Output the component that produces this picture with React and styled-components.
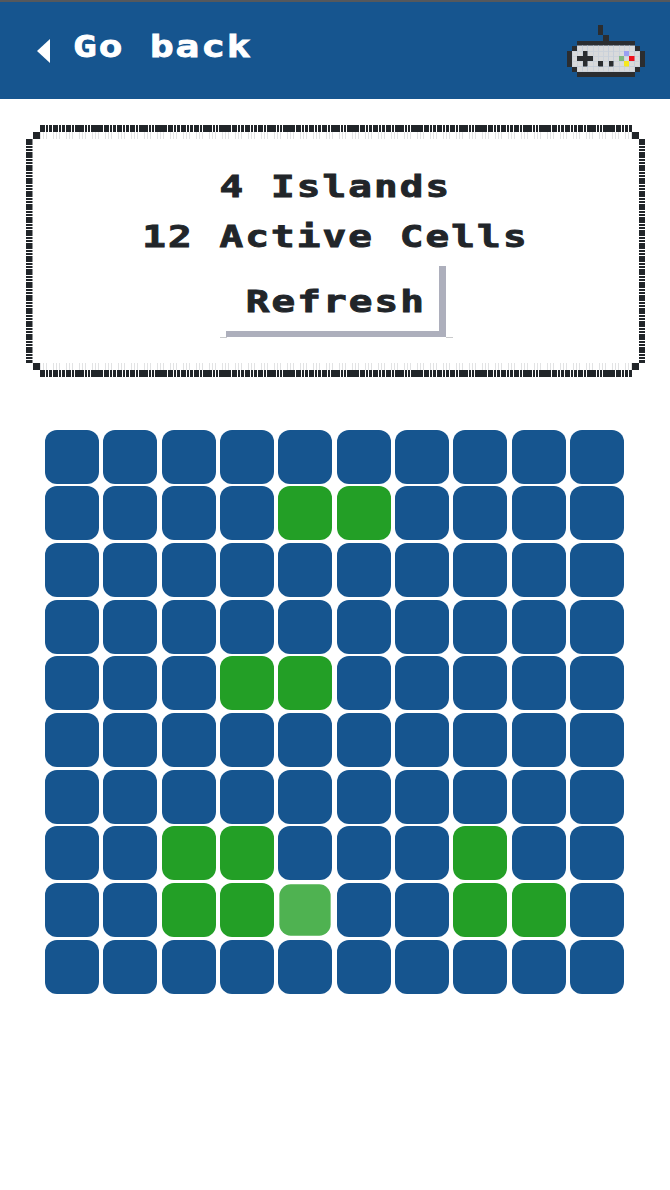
import React from "react"
import styled, { createGlobalStyle } from "styled-components"

const BLUE = "#16558f"
const GREEN = "#239f26"
const INK = "#212529"

const GlobalStyle = createGlobalStyle`
  html, body {
    margin: 0;
    padding: 0;
    background: #ffffff;
  }
`

const ACTIVE = {
  1: [4, 5],
  4: [3, 4],
  7: [2, 3, 7],
  8: [2, 3, 4, 7, 8],
}
const HOVERED = "8-4"

// sprite rows for the controller, one char per pixel
const PAD = [
  "......d........",
  "......d........",
  ".......d.......",
  "..ddddddddddd..",
  ".dllllllllllld.",
  "dlldlllllllplld",
  "dldddlllllglrld",
  "dlldlldldllylld",
  ".dllllllllllld.",
  "..ddddddddddd..",
]
const PIXEL_COLORS = {
  d: "#2b2d30",
  l: "#d9dadb",
  p: "#9a9ff2",
  g: "#7fb77e",
  r: "#f0101c",
  y: "#f6e81e",
}

const hBars = (color) => `repeating-linear-gradient(90deg,
  ${color} 0 5.4px, transparent 5.4px 6.2px,
  ${color} 6.2px 8.4px, transparent 8.4px 9.2px,
  ${color} 9.2px 12px, transparent 12px 12.8px)`
const vBars = (color) => `repeating-linear-gradient(180deg,
  ${color} 0 6px, transparent 6px 7px,
  ${color} 7px 9px, transparent 9px 10px,
  ${color} 10px 12px, transparent 12px 13px)`
const hTicks = `repeating-linear-gradient(90deg,
  #e2e3e4 0 1px, transparent 1px 3px,
  #e2e3e4 3px 4px, transparent 4px 6px,
  #e2e3e4 6px 7px, transparent 7px 13px)`
const solid = `linear-gradient(${INK}, ${INK})`

const Page = styled.div`
  width: 670px;
  height: 1190px;
  background: #ffffff;
  overflow: hidden;
`

const Header = styled.header`
  box-sizing: border-box;
  height: 99px;
  display: flex;
  align-items: center;
  justify-content: space-between;
  padding: 0 25px 0 37px;
  background: ${BLUE};
  border-top: 2px solid #55585c;
`

const BackLink = styled.div`
  display: flex;
  align-items: center;
  gap: 23px;
  color: #ffffff;
`

const BackLabel = styled.span`
  display: inline-block;
  margin-top: -7px;
  font-family: "DejaVu Sans Mono", monospace;
  font-weight: 700;
  font-size: 30px;
  line-height: 34px;
  letter-spacing: 1.5px;
  white-space: pre;
  -webkit-text-stroke: 0.9px #ffffff;
  transform: scaleX(1.31);
  transform-origin: left center;
`

const Main = styled.main`
  padding: 26px 25px 0 26px;
`

const Panel = styled.section`
  box-sizing: border-box;
  height: 252px;
  padding: 37px 0 0;
  display: flex;
  flex-direction: column;
  align-items: center;
  background-repeat: no-repeat;
  background-image:
    ${hBars(INK)}, ${hTicks},
    ${hBars(INK)}, ${hTicks},
    ${vBars(INK)}, ${vBars(INK)},
    ${solid}, ${solid}, ${solid}, ${solid};
  background-size:
    592px 7px, 592px 7px,
    592px 7px, 592px 7px,
    6.5px 224px, 6.5px 224px,
    7px 7px, 7px 7px, 7px 7px, 7px 7px;
  background-position:
    14px 0, 14px 7px,
    14px 245px, 14px 238px,
    0 14px, 613px 14px,
    7px 7px, 606px 7px, 7px 238px, 606px 238px;
`

const StatLine = styled.div`
  height: 50px;
  line-height: 50px;
  color: ${INK};
  font-family: "DejaVu Sans Mono", monospace;
  font-weight: 700;
  font-size: 30px;
  letter-spacing: 1.6px;
  white-space: pre;
  -webkit-text-stroke: 0.9px ${INK};
  transform: scaleX(1.31);
`

const RefreshButton = styled.button`
  position: relative;
  box-sizing: border-box;
  width: 220px;
  height: 71px;
  margin-top: 4px;
  padding: 0;
  border: 0;
  background: #ffffff;
  box-shadow: inset -7px -6px 0 #adafbc;
  color: ${INK};
  cursor: pointer;

  &::before,
  &::after {
    content: "";
    position: absolute;
    bottom: -1px;
    width: 7px;
    height: 1px;
    background: #c9cacc;
  }
  &::before {
    left: -6px;
  }
  &::after {
    right: -7px;
  }
`

const RefreshLabel = styled.span`
  display: inline-block;
  font-family: "DejaVu Sans Mono", monospace;
  font-weight: 700;
  font-size: 30px;
  letter-spacing: 1.6px;
  -webkit-text-stroke: 0.9px ${INK};
  transform: scaleX(1.31);
`

const Board = styled.div`
  display: grid;
  grid-template-columns: repeat(10, 54px);
  grid-auto-rows: 54px;
  justify-content: space-between;
  align-content: space-between;
  width: 579px;
  height: 564px;
  margin: 52.7px 0 0 19px;
`

const Cell = styled.div`
  border-radius: 12px;
  background: ${(p) => (p.$on ? GREEN : BLUE)};
  opacity: ${(p) => (p.$hover ? 0.8 : 1)};
  transform: ${(p) => (p.$hover ? "scale(0.95)" : "none")};
`

const BackArrow = () => (
  <svg width="13" height="24" viewBox="0 0 13 24" aria-hidden="true">
    <polygon points="0,12 13,0 13,24" fill="#ffffff" />
  </svg>
)

const GamePad = () => (
  <svg width="78" height="52" viewBox="0 0 15 10" shapeRendering="crispEdges" aria-hidden="true">
    {PAD.map((row, y) =>
      row.split("").map((ch, x) =>
        PIXEL_COLORS[ch] ? (
          <rect
            key={`${x}-${y}`}
            x={x}
            y={y}
            width="1"
            height="1"
            fill={PIXEL_COLORS[ch]}
            stroke={ch === "l" ? "#bfcbd8" : "none"}
            strokeWidth="0.1"
          />
        ) : null
      )
    )}
  </svg>
)

const App = () => {
  const rows = Array.from({ length: 10 }, (_, r) => r)
  const cols = Array.from({ length: 10 }, (_, c) => c)
  return (
    <Page>
      <GlobalStyle />
      <Header>
        <BackLink>
          <BackArrow />
          <BackLabel>Go back</BackLabel>
        </BackLink>
        <GamePad />
      </Header>
      <Main>
        <Panel>
          <StatLine>4 Islands</StatLine>
          <StatLine>12 Active Cells</StatLine>
          <RefreshButton>
            <RefreshLabel>Refresh</RefreshLabel>
          </RefreshButton>
        </Panel>
        <Board>
          {rows.map((r) =>
            cols.map((c) => (
              <Cell
                key={`${r}-${c}`}
                $on={(ACTIVE[r] || []).includes(c)}
                $hover={`${r}-${c}` === HOVERED}
              />
            ))
          )}
        </Board>
      </Main>
    </Page>
  )
}

export default App
